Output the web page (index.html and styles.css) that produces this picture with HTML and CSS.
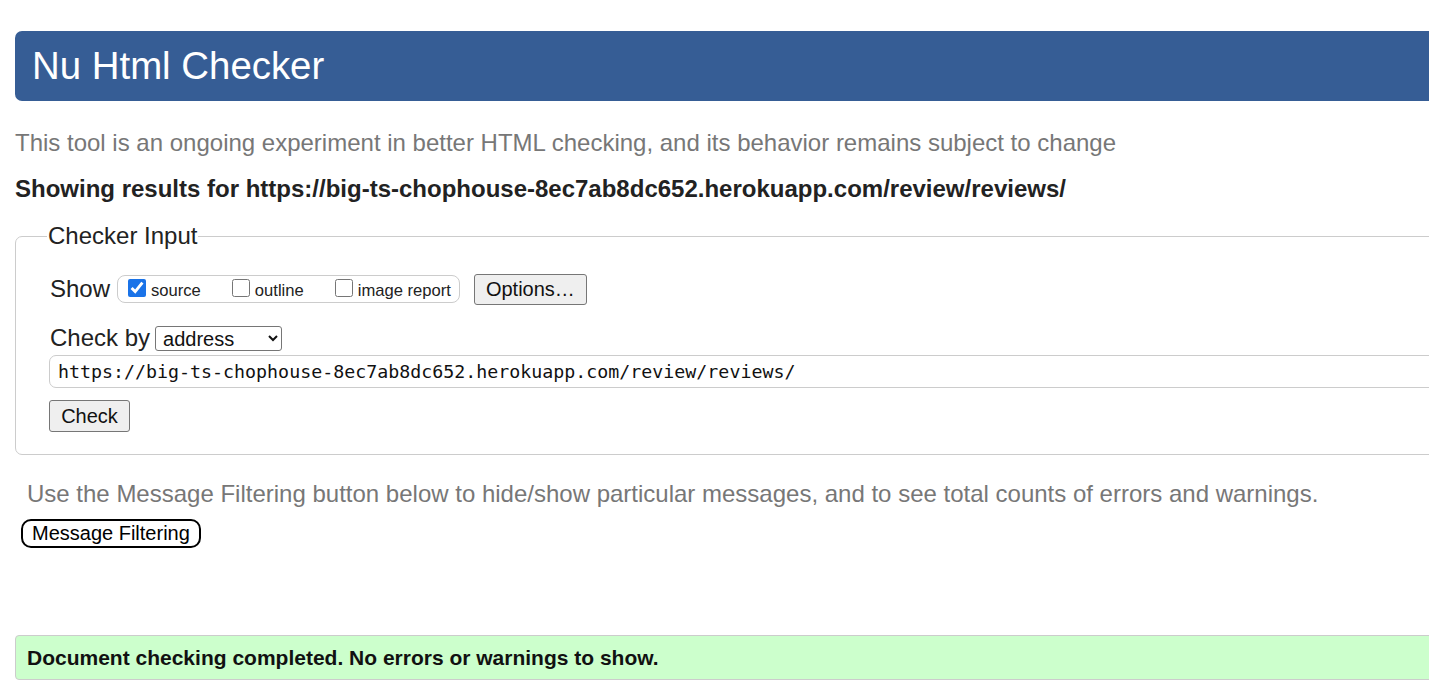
FILE: index.html
```html
<!DOCTYPE html>
<html>
<head>
<meta charset="utf-8">
<title>Showing results for https://big-ts-chophouse-8ec7ab8dc652.herokuapp.com/review/reviews/ - Nu Html Checker</title>
<link rel="stylesheet" href="styles.css">
</head>
<body>
<div class="page">
  <h1 class="title-bar">Nu Html Checker</h1>
  <p class="intro">This tool is an ongoing experiment in better HTML checking, and its behavior remains subject to change</p>
  <p class="results-for">Showing results for https://big-ts-chophouse-8ec7ab8dc652.herokuapp.com/review/reviews/</p>
  <fieldset class="checker">
    <legend class="checker-legend">Checker Input</legend>
    <div class="show-row">
      <span class="label">Show</span>
      <div class="show-group">
        <label class="opt"><input type="checkbox" checked><span>source</span></label>
        <label class="opt"><input type="checkbox"><span>outline</span></label>
        <label class="opt"><input type="checkbox"><span>image report</span></label>
      </div>
      <button class="btn btn-options">Options…</button>
    </div>
    <div class="checkby-row">
      <span class="label">Check by</span>
      <select class="select"><option>address</option></select>
    </div>
    <input class="url" type="text" value="https://big-ts-chophouse-8ec7ab8dc652.herokuapp.com/review/reviews/">
    <div class="check-row"><button class="btn btn-check">Check</button></div>
  </fieldset>
  <p class="filter-note">Use the Message Filtering button below to hide/show particular messages, and to see total counts of errors and warnings.</p>
  <button class="filter-btn">Message Filtering</button>
  <div class="success">Document checking completed. No errors or warnings to show.</div>
</div>
</body>
</html>
```
FILE: styles.css
```css
html, body {
  margin: 0;
  padding: 0;
  overflow: hidden;
  background: #fff;
}
body {
  font-family: "Liberation Sans", Arial, sans-serif;
  color: #222;
}
.page {
  width: 1480px;
  padding: 31px 0 0 15px;
  display: flex;
  flex-direction: column;
  align-items: flex-start;
}
.title-bar {
  box-sizing: border-box;
  width: 100%;
  height: 70px;
  margin: 0;
  padding: 0 0 0 17px;
  background: #365d95;
  color: #fff;
  font-weight: normal;
  font-size: 38.4px;
  line-height: 70px;
  border-radius: 7px 0 0 7px;
}
.intro {
  margin: 29px 0 0 0;
  font-size: 24px;
  line-height: 26px;
  color: #777;
}
.results-for {
  margin: 20px 0 0 0;
  font-size: 24px;
  font-weight: bold;
  line-height: 26px;
  color: #222;
}
.checker {
  box-sizing: border-box;
  width: 100%;
  margin: 21px 0 0 0;
  padding: 8px 0 22px 34px;
  border: 1px solid #ccc;
  border-radius: 7px;
  min-width: 0;
}
.checker-legend {
  font-size: 24px;
  line-height: 26px;
  padding: 0 1px;
  margin-left: -3px;
  color: #222;
}
.label {
  font-size: 24px;
  color: #222;
}
.show-row {
  display: flex;
  align-items: center;
  height: 30px;
  margin-top: 17px;
}
.show-group {
  display: flex;
  align-items: center;
  height: 26px;
  margin-left: 7px;
  padding: 0 8px 0 10px;
  border: 1px solid #ccc;
  border-radius: 8px;
  gap: 31px;
}
.opt {
  display: flex;
  align-items: center;
  font-size: 16.6px;
  color: #222;
}
.opt input {
  margin: 0 5px 3px 0;
  width: 18px;
  height: 18px;
  accent-color: #1a73e8;
}
.opt span {
  position: relative;
  top: 2px;
}
.btn {
  font-family: "Liberation Sans", Arial, sans-serif;
  font-size: 20px;
  color: #111;
  background: #efefef;
  border: 1px solid #767676;
  border-radius: 3px;
  padding: 0 11px;
}
.btn-options {
  height: 31px;
  margin-left: 14px;
}
.checkby-row {
  display: flex;
  align-items: center;
  margin-top: 21px;
  height: 26px;
}
.select {
  margin-left: 5px;
  height: 25px;
  width: 127px;
  font-family: "Liberation Sans", Arial, sans-serif;
  font-size: 20px;
  color: #111;
  background: #fff;
  border: 1px solid #767676;
  border-radius: 3px;
  padding: 0 3px;
}
.url {
  box-sizing: border-box;
  display: block;
  width: 100%;
  height: 33px;
  margin: 4px 0 0 -1px;
  padding: 0 8px;
  border: 1px solid #ccc;
  border-radius: 7px;
  font-family: "DejaVu Sans Mono", "Liberation Mono", monospace;
  font-size: 18.3px;
  color: #111;
  background: #fff;
}
.check-row {
  margin-top: 12px;
}
.btn-check {
  height: 32px;
  margin-left: -1px;
  width: 81px;
  padding: 0;
}
.filter-note {
  margin: 26px 0 0 12px;
  font-size: 24px;
  line-height: 26px;
  color: #777;
}
.filter-btn {
  margin: 12px 0 0 6px;
  height: 29px;
  padding: 0 9px;
  font-family: "Liberation Sans", Arial, sans-serif;
  font-size: 20px;
  color: #000;
  background: #fff;
  border: 2px solid #000;
  border-radius: 10px;
}
.success {
  box-sizing: border-box;
  width: 100%;
  margin-top: 87px;
  height: 45px;
  padding: 0 11px;
  display: flex;
  align-items: center;
  background: #ccffcc;
  border: 1px solid #ccc;
  border-radius: 4px;
  font-size: 21px;
  font-weight: bold;
  color: #111;
}
```
